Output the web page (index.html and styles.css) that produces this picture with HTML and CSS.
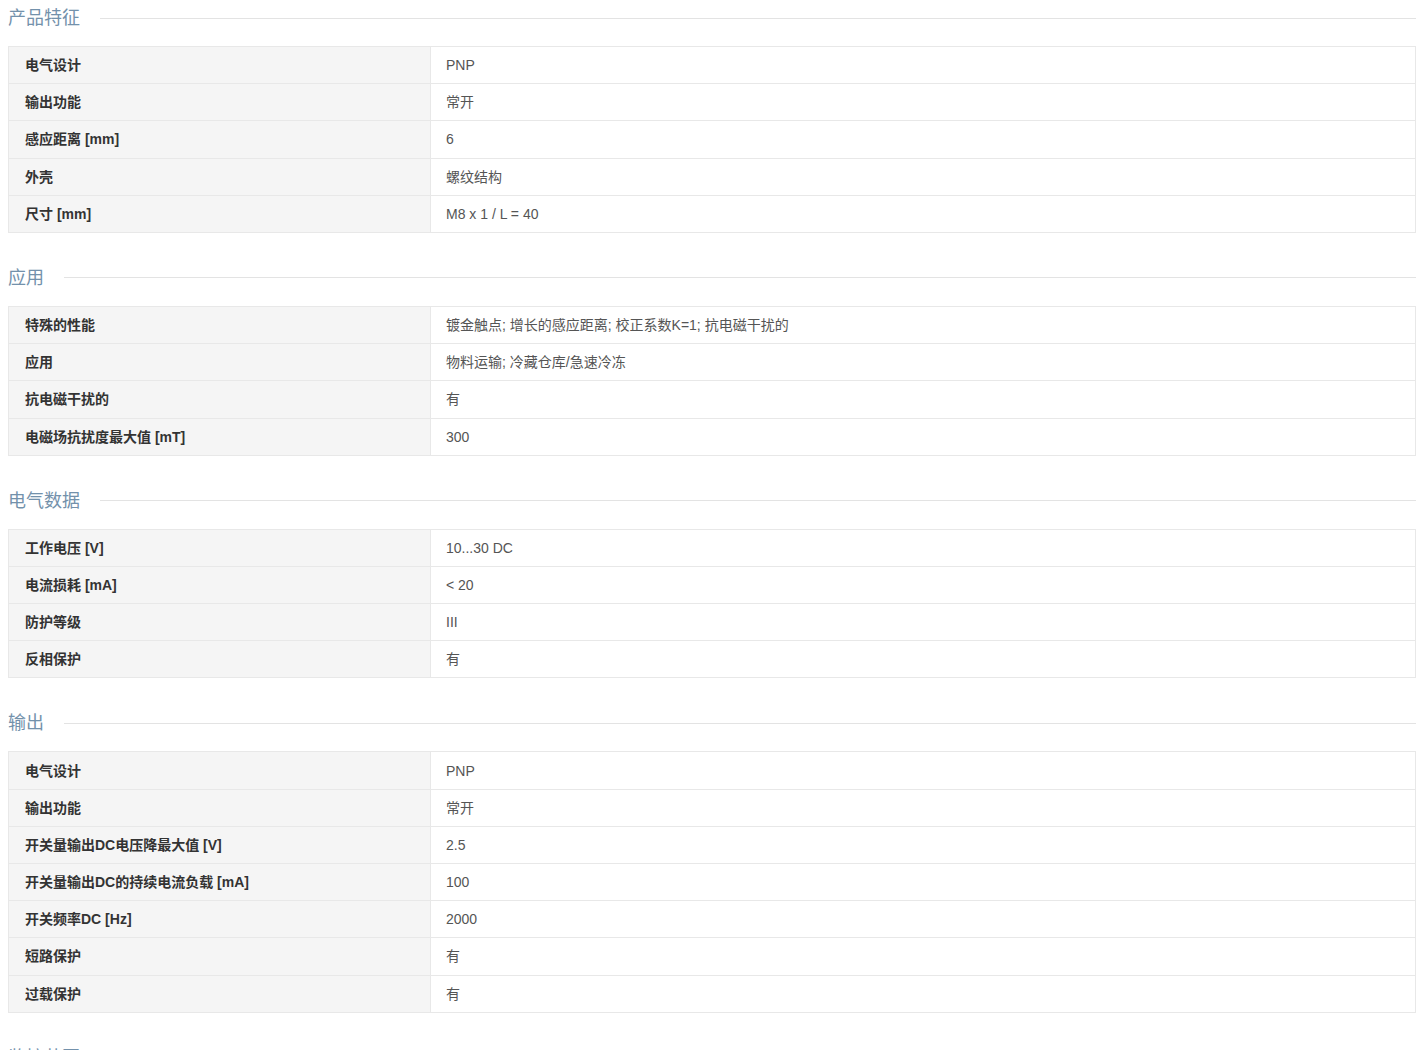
FILE: index.html
```html
<!DOCTYPE html>
<html lang="zh">
<head>
<meta charset="utf-8">
<link rel="stylesheet" href="styles.css">
</head>
<body>
<div class="page">
  <section class="sec">
    <h2 class="sec-title"><span>产品特征</span></h2>
    <div class="tbl">
      <div class="row"><div class="k">电气设计</div><div class="v">PNP</div></div>
      <div class="row"><div class="k">输出功能</div><div class="v">常开</div></div>
      <div class="row"><div class="k">感应距离 [mm]</div><div class="v">6</div></div>
      <div class="row"><div class="k">外壳</div><div class="v">螺纹结构</div></div>
      <div class="row"><div class="k">尺寸 [mm]</div><div class="v">M8 x 1 / L = 40</div></div>
    </div>
  </section>
  <section class="sec">
    <h2 class="sec-title"><span>应用</span></h2>
    <div class="tbl">
      <div class="row"><div class="k">特殊的性能</div><div class="v">镀金触点; 增长的感应距离; 校正系数K=1; 抗电磁干扰的</div></div>
      <div class="row"><div class="k">应用</div><div class="v">物料运输; 冷藏仓库/急速冷冻</div></div>
      <div class="row"><div class="k">抗电磁干扰的</div><div class="v">有</div></div>
      <div class="row"><div class="k">电磁场抗扰度最大值 [mT]</div><div class="v">300</div></div>
    </div>
  </section>
  <section class="sec">
    <h2 class="sec-title"><span>电气数据</span></h2>
    <div class="tbl">
      <div class="row"><div class="k">工作电压 [V]</div><div class="v">10...30 DC</div></div>
      <div class="row"><div class="k">电流损耗 [mA]</div><div class="v">&lt; 20</div></div>
      <div class="row"><div class="k">防护等级</div><div class="v">III</div></div>
      <div class="row"><div class="k">反相保护</div><div class="v">有</div></div>
    </div>
  </section>
  <section class="sec">
    <h2 class="sec-title"><span>输出</span></h2>
    <div class="tbl">
      <div class="row"><div class="k">电气设计</div><div class="v">PNP</div></div>
      <div class="row"><div class="k">输出功能</div><div class="v">常开</div></div>
      <div class="row"><div class="k">开关量输出DC电压降最大值 [V]</div><div class="v">2.5</div></div>
      <div class="row"><div class="k">开关量输出DC的持续电流负载 [mA]</div><div class="v">100</div></div>
      <div class="row"><div class="k">开关频率DC [Hz]</div><div class="v">2000</div></div>
      <div class="row"><div class="k">短路保护</div><div class="v">有</div></div>
      <div class="row"><div class="k">过载保护</div><div class="v">有</div></div>
    </div>
  </section>
  <section class="sec">
    <h2 class="sec-title"><span>监控范围</span></h2>
  </section>
</div>
</body>
</html>
```

FILE: styles.css
```css
html, body {
  margin: 0;
  padding: 0;
  background: #fff;
}
body {
  font-family: "Liberation Sans", Arial, "Noto Sans CJK SC", sans-serif;
  color: #555;
  font-size: 14px;
}
.page {
  padding: 0 11px 0 8px;
}
.sec {
  margin-bottom: 27px;
}
.sec-title {
  display: flex;
  align-items: center;
  gap: 20px;
  height: 36px;
  margin: 0 0 10px 0;
  font-size: 18px;
  font-weight: normal;
  color: #7391ab;
  line-height: 36px;
}
.sec-title::after {
  content: "";
  flex: 1;
  height: 1px;
  background: #e3e3e3;
}
.tbl {
  border: 1px solid #e8e8e8;
  border-top: none;
}
.row {
  display: grid;
  grid-template-columns: 422px 1fr;
  border-top: 1px solid #e8e8e8;
}
.k {
  background: #f5f5f5;
  border-right: 1px solid #e8e8e8;
  padding: 10.1px 16px;
  line-height: 16px;
  font-weight: bold;
  color: #333;
}
.v {
  padding: 10.1px 15px;
  line-height: 16px;
  color: #555;
}
```
